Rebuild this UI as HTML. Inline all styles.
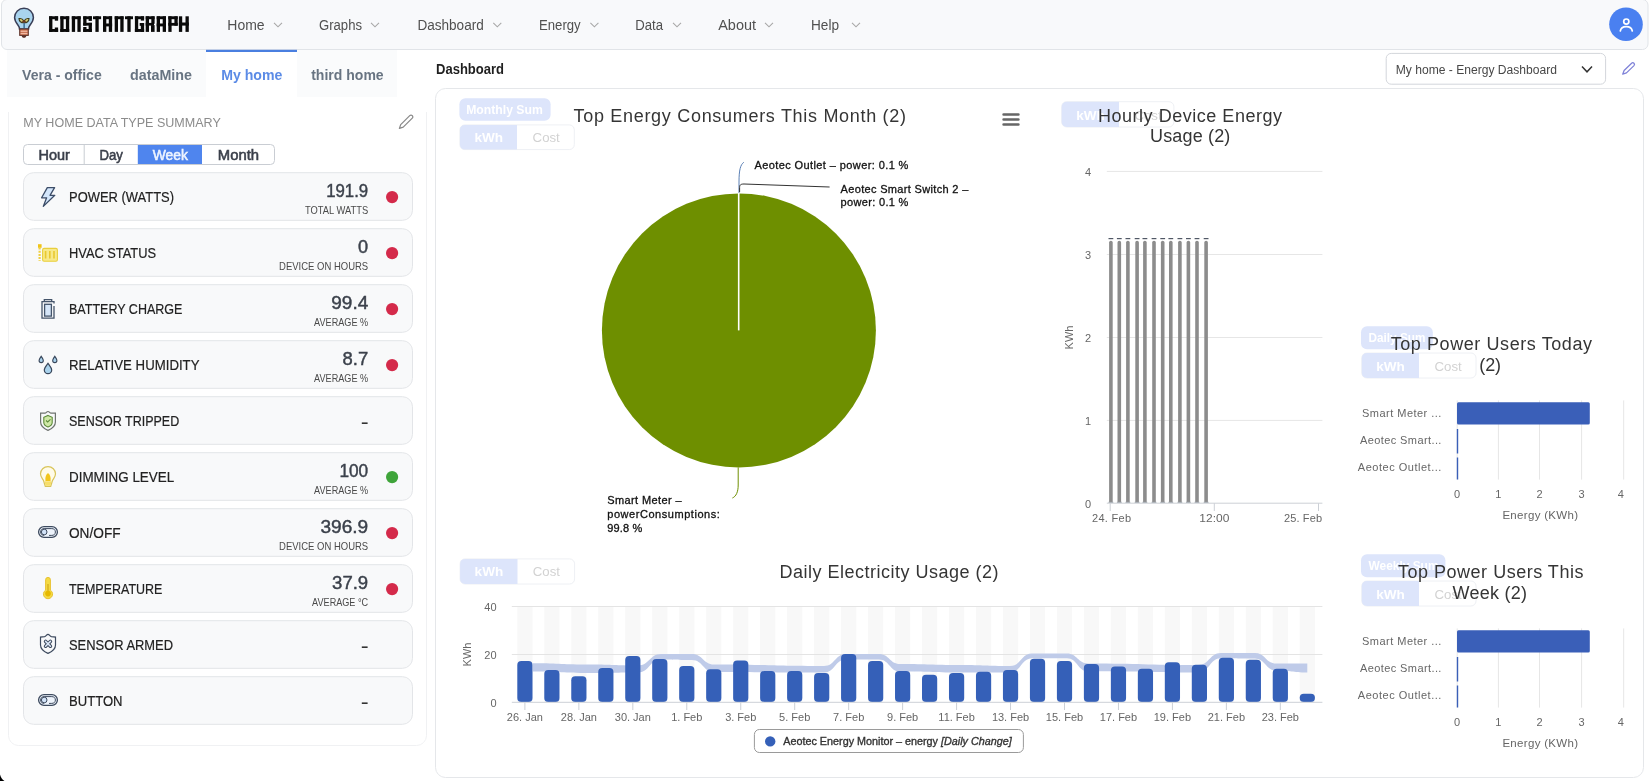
<!DOCTYPE html><html><head><meta charset="utf-8"><title>ConstantGraph</title><style>html,body{margin:0;padding:0;background:#fff;width:1649px;height:781px;overflow:hidden}svg{display:block;font-family:"Liberation Sans",sans-serif;will-change:transform}</style></head><body>
<svg width="1649" height="781" viewBox="0 0 1649 781">
<rect x="1.5" y="-0.5" width="1646.5" height="50" rx="5.5" fill="#f8f9fb" stroke="#e1e4e8" stroke-width="1"/>
<g>
<path d="M24,8.3 C18.7,8.3 14.6,12.4 14.6,17.6 C14.6,20.9 16.3,23 17.9,25 C18.9,26.3 19.5,27.5 19.5,29 L28.5,29 C28.5,27.5 29.1,26.3 30.1,25 C31.7,23 33.4,20.9 33.4,17.6 C33.4,12.4 29.3,8.3 24,8.3 Z" fill="#a9d4ef" stroke="#3a3f57" stroke-width="1.5"/>
<path d="M24,21 C22.5,18.6 20.5,18.2 19,18.6 C19.2,21.2 20.8,22.8 24,22.8 C27.2,22.8 28.8,21.2 29,18.6 C27.5,18.2 25.5,18.6 24,21 Z" fill="#dcd27a" stroke="#3d3a1c" stroke-width="1.1"/>
<ellipse cx="24" cy="21.6" rx="1.8" ry="1.4" fill="#6a3a20"/>
<rect x="23.4" y="22.8" width="1.5" height="6.2" fill="#3d6f95"/>
<rect x="19.7" y="29" width="8.6" height="6.4" fill="#c66e4e" stroke="#5a3028" stroke-width="1"/>
<rect x="20.6" y="30.6" width="6.8" height="1.3" fill="#f2b9a2"/>
<rect x="20.6" y="32.9" width="6.8" height="1.3" fill="#f2b9a2"/>
<path d="M21.6,35.4 L26.4,35.4 C26.2,36.8 25.4,37.7 24,37.7 C22.6,37.7 21.8,36.8 21.6,35.4 Z" fill="#5a3028"/>
</g>
<g fill="#0a0a0a"><rect x="49.10" y="16.30" width="3.30" height="15.60"/><rect x="49.10" y="16.30" width="9.00" height="2.90"/><rect x="49.10" y="29.00" width="9.00" height="2.90"/><rect x="54.80" y="16.30" width="3.30" height="4.40"/><rect x="54.80" y="27.50" width="3.30" height="4.40"/><rect x="60.30" y="16.30" width="3.30" height="15.60"/><rect x="65.90" y="16.30" width="3.30" height="15.60"/><rect x="60.30" y="16.30" width="8.90" height="2.90"/><rect x="60.30" y="29.00" width="8.90" height="2.90"/><rect x="71.80" y="16.30" width="3.30" height="15.60"/><rect x="77.40" y="16.30" width="3.30" height="15.60"/><rect x="71.80" y="16.30" width="8.90" height="2.90"/><rect x="83.20" y="16.30" width="8.70" height="2.90"/><rect x="88.60" y="16.30" width="3.30" height="4.60"/><rect x="83.20" y="16.30" width="3.30" height="9.30"/><rect x="83.20" y="22.80" width="8.70" height="2.80"/><rect x="88.60" y="22.80" width="3.30" height="9.10"/><rect x="83.20" y="29.00" width="8.70" height="2.90"/><rect x="83.20" y="27.00" width="3.30" height="4.90"/><rect x="93.00" y="16.30" width="8.10" height="2.90"/><rect x="95.40" y="16.30" width="3.30" height="15.60"/><rect x="103.00" y="16.30" width="3.30" height="15.60"/><rect x="108.80" y="16.30" width="3.30" height="15.60"/><rect x="103.00" y="16.30" width="9.10" height="2.90"/><rect x="103.00" y="23.50" width="9.10" height="2.90"/><rect x="114.70" y="16.30" width="3.30" height="15.60"/><rect x="120.30" y="16.30" width="3.30" height="15.60"/><rect x="114.70" y="16.30" width="8.90" height="2.90"/><rect x="125.00" y="16.30" width="8.00" height="2.90"/><rect x="127.35" y="16.30" width="3.30" height="15.60"/><rect x="134.90" y="16.30" width="3.30" height="15.60"/><rect x="134.90" y="16.30" width="9.20" height="2.90"/><rect x="134.90" y="29.00" width="9.20" height="2.90"/><rect x="140.80" y="16.30" width="3.30" height="4.30"/><rect x="140.80" y="23.00" width="3.30" height="8.90"/><rect x="139.70" y="23.00" width="4.40" height="2.80"/><rect x="145.70" y="16.30" width="3.30" height="15.60"/><rect x="151.30" y="16.30" width="3.30" height="7.50"/><rect x="145.70" y="16.30" width="8.90" height="2.90"/><rect x="145.70" y="22.90" width="8.30" height="2.70"/><rect x="151.00" y="25.10" width="3.60" height="6.80"/><rect x="156.70" y="16.30" width="3.30" height="15.60"/><rect x="162.70" y="16.30" width="3.30" height="15.60"/><rect x="156.70" y="16.30" width="9.30" height="2.90"/><rect x="156.70" y="23.50" width="9.30" height="2.90"/><rect x="168.30" y="16.30" width="3.30" height="15.60"/><rect x="168.30" y="16.30" width="9.40" height="2.90"/><rect x="174.40" y="16.30" width="3.30" height="9.40"/><rect x="168.30" y="22.90" width="9.40" height="2.80"/><rect x="178.90" y="16.30" width="3.30" height="15.60"/><rect x="185.50" y="16.30" width="3.30" height="15.60"/><rect x="178.90" y="22.50" width="9.90" height="3.10"/></g>
<text x="227.3" y="30.1" font-size="14" fill="#505050" textLength="37.3" lengthAdjust="spacingAndGlyphs" >Home</text>
<path d="M274,22.8 L278,26.8 L282,22.8" fill="none" stroke="#a8a8a8" stroke-width="1.1"/>
<text x="319" y="30.1" font-size="14" fill="#505050" textLength="43" lengthAdjust="spacingAndGlyphs" >Graphs</text>
<path d="M371,22.8 L375,26.8 L379,22.8" fill="none" stroke="#a8a8a8" stroke-width="1.1"/>
<text x="417.4" y="30.1" font-size="14" fill="#505050" textLength="66.4" lengthAdjust="spacingAndGlyphs" >Dashboard</text>
<path d="M493.3,22.8 L497.3,26.8 L501.3,22.8" fill="none" stroke="#a8a8a8" stroke-width="1.1"/>
<text x="539" y="30.1" font-size="14" fill="#505050" textLength="41.7" lengthAdjust="spacingAndGlyphs" >Energy</text>
<path d="M590.4,22.8 L594.4,26.8 L598.4,22.8" fill="none" stroke="#a8a8a8" stroke-width="1.1"/>
<text x="635.2" y="30.1" font-size="14" fill="#505050" textLength="27.8" lengthAdjust="spacingAndGlyphs" >Data</text>
<path d="M673,22.8 L677,26.8 L681,22.8" fill="none" stroke="#a8a8a8" stroke-width="1.1"/>
<text x="718.2" y="30.1" font-size="14" fill="#505050" textLength="37.8" lengthAdjust="spacingAndGlyphs" >About</text>
<path d="M765,22.8 L769,26.8 L773,22.8" fill="none" stroke="#a8a8a8" stroke-width="1.1"/>
<text x="811" y="30.1" font-size="14" fill="#505050" textLength="28" lengthAdjust="spacingAndGlyphs" >Help</text>
<path d="M852,22.8 L856,26.8 L860,22.8" fill="none" stroke="#a8a8a8" stroke-width="1.1"/>
<circle cx="1626" cy="24.2" r="16.8" fill="#4a80f0"/>
<circle cx="1626.3" cy="21.6" r="2.6" fill="none" stroke="#fff" stroke-width="1.7"/>
<path d="M1620.3,31 C1620.8,27.8 1623,26.6 1626.3,26.6 C1629.6,26.6 1631.8,27.8 1632.3,31" fill="none" stroke="#fff" stroke-width="1.7" stroke-linecap="round"/>
<rect x="7" y="50" width="390" height="47" fill="#fafbfc"/>
<rect x="206" y="50" width="91" height="47.5" fill="#ffffff"/>
<rect x="206" y="49.8" width="91" height="2.2" fill="#4a7fe0"/>
<text x="22.1" y="80" font-size="14" fill="#687482" font-weight="700" textLength="79.6" lengthAdjust="spacingAndGlyphs" >Vera - office</text>
<text x="130" y="80" font-size="14" fill="#687482" font-weight="700" textLength="62" lengthAdjust="spacingAndGlyphs" >dataMine</text>
<text x="221.2" y="80" font-size="14" fill="#5b8be6" font-weight="700" textLength="61.2" lengthAdjust="spacingAndGlyphs" >My home</text>
<text x="311.2" y="80" font-size="14" fill="#687482" font-weight="700" textLength="72.5" lengthAdjust="spacingAndGlyphs" >third home</text>
<text x="436" y="74" font-size="14" fill="#1f1f1f" font-weight="700" textLength="68" lengthAdjust="spacingAndGlyphs" >Dashboard</text>
<rect x="1386.2" y="53.4" width="219.4" height="30.8" rx="5" fill="#fff" stroke="#d3d6db"/>
<text x="1395.8" y="74.1" font-size="12.5" fill="#474747" textLength="161.2" lengthAdjust="spacingAndGlyphs" >My home - Energy Dashboard</text>
<path d="M1582,66.5 L1587,71.8 L1592,66.5" fill="none" stroke="#333" stroke-width="1.5"/>
<g fill="none" stroke="#7f82d8" stroke-width="1.25" stroke-linejoin="round"><path d="M1622.70,74.20 L1626.47,72.91 L1633.98,65.62 A1.7,1.7 0 0 0 1631.62,63.18 L1624.10,70.47 Z"/></g>
<defs><linearGradient id="fadeL" x1="0" y1="0" x2="0" y2="1"><stop offset="0" stop-color="#eceef1" stop-opacity="0"/><stop offset="0.05" stop-color="#eceef1" stop-opacity="1"/></linearGradient></defs>
<path d="M8.5,112 V735.5 A10,10 0 0 0 18.5,745.5 H416.5 A10,10 0 0 0 426.5,735.5 V112" fill="none" stroke="#f0f1f3" stroke-width="1"/>
<rect x="7" y="50" width="199" height="47" fill="#fafbfc"/><rect x="297" y="50" width="100" height="47" fill="#fafbfc"/>
<text x="22.1" y="80" font-size="14" fill="#687482" font-weight="700" textLength="79.6" lengthAdjust="spacingAndGlyphs" >Vera - office</text>
<text x="130" y="80" font-size="14" fill="#687482" font-weight="700" textLength="62" lengthAdjust="spacingAndGlyphs" >dataMine</text>
<text x="311.2" y="80" font-size="14" fill="#687482" font-weight="700" textLength="72.5" lengthAdjust="spacingAndGlyphs" >third home</text>
<text x="23.3" y="127.1" font-size="13" fill="#8c8c8c" textLength="197.5" lengthAdjust="spacingAndGlyphs" >MY HOME DATA TYPE SUMMARY</text>
<g fill="none" stroke="#8a8a8a" stroke-width="1.25" stroke-linejoin="round"><path d="M399.40,128.40 L403.22,127.14 L412.27,118.18 A1.8,1.8 0 0 0 409.73,115.62 L400.69,124.59 Z"/></g>
<rect x="23.5" y="144.5" width="251" height="20" rx="4" fill="#fff" stroke="#c9cdd3"/>
<rect x="137.8" y="145" width="64.2" height="19" fill="#4f85ee"/>
<line x1="84.2" y1="145" x2="84.2" y2="164" stroke="#c9cdd3"/>
<text x="38.5" y="160" font-size="14" fill="#3a3f4a" textLength="31.4" lengthAdjust="spacingAndGlyphs" stroke="#3a3f4a" stroke-width="0.55">Hour</text>
<text x="99.5" y="160" font-size="14" fill="#3a3f4a" textLength="23.4" lengthAdjust="spacingAndGlyphs" stroke="#3a3f4a" stroke-width="0.55">Day</text>
<text x="152.8" y="160" font-size="14" fill="#eef4ff" textLength="35.1" lengthAdjust="spacingAndGlyphs" stroke="#eef4ff" stroke-width="0.55">Week</text>
<text x="217.8" y="160" font-size="14" fill="#3a3f4a" textLength="41.2" lengthAdjust="spacingAndGlyphs" stroke="#3a3f4a" stroke-width="0.55">Month</text>
<rect x="23.5" y="172.7" width="389" height="47.6" rx="10" fill="#f8f9fa" stroke="#e3e5e8"/>
<g transform="translate(0,0)"><path d="M47.3,187.6 L54.6,187.6 L50,195.3 L54.8,195.3 L43.3,206.4 L46.6,197.8 L41.6,197.8 Z" fill="#d3e6fb" stroke="#3c4d68" stroke-width="1.3" stroke-linejoin="round"/></g>
<text x="69" y="202.2" font-size="14.6" fill="#222" textLength="105" lengthAdjust="spacingAndGlyphs" stroke="#222" stroke-width="0.2">POWER (WATTS)</text>
<text x="368.2" y="197.4" font-size="18.5" fill="#3b414b" text-anchor="end" textLength="42" lengthAdjust="spacingAndGlyphs" stroke="#3b414b" stroke-width="0.45">191.9</text>
<text x="368.2" y="214" font-size="10.4" fill="#4a4a4a" text-anchor="end" textLength="63.2" lengthAdjust="spacingAndGlyphs" >TOTAL WATTS</text>
<circle cx="392.1" cy="197.1" r="6.1" fill="#d42a4a"/>
<rect x="23.5" y="228.7" width="389" height="47.6" rx="10" fill="#f8f9fa" stroke="#e3e5e8"/>
<g transform="translate(0,0)"><rect x="38" y="244.2" width="3.6" height="3.6" fill="#f0c419"/><path d="M39.6,247.5 L39.6,261" stroke="#f0d040" stroke-width="2.2" stroke-dasharray="2,1.2"/><rect x="42.6" y="248.4" width="14.8" height="12.8" rx="1.5" fill="#f7e98a" stroke="#e9cf3c" stroke-width="1.1"/><path d="M45.6,251 V258.6 M49.8,251 V258.6 M54,251 V258.6" stroke="#e9c830" stroke-width="1.6"/></g>
<text x="69" y="258.2" font-size="14.6" fill="#222" textLength="87" lengthAdjust="spacingAndGlyphs" stroke="#222" stroke-width="0.2">HVAC STATUS</text>
<text x="368.2" y="253.4" font-size="18.5" fill="#3b414b" text-anchor="end" textLength="10.1" lengthAdjust="spacingAndGlyphs" stroke="#3b414b" stroke-width="0.45">0</text>
<text x="368.2" y="270" font-size="10.4" fill="#4a4a4a" text-anchor="end" textLength="89.1" lengthAdjust="spacingAndGlyphs" >DEVICE ON HOURS</text>
<circle cx="392.1" cy="253.1" r="6.1" fill="#d42a4a"/>
<rect x="23.5" y="284.7" width="389" height="47.6" rx="10" fill="#f8f9fa" stroke="#e3e5e8"/>
<g transform="translate(0,0)"><path d="M44.3,301.4 V299.6 H51.7 V301.4" fill="none" stroke="#44546a" stroke-width="1.3"/><path d="M54,306 V318.1 H42 V301.6 H54 V303.6" fill="none" stroke="#44546a" stroke-width="1.3"/><rect x="44.6" y="304.3" width="6.8" height="11.8" fill="#d6e6f8" stroke="#44546a" stroke-width="1.3"/></g>
<text x="69" y="314.2" font-size="14.6" fill="#222" textLength="113.4" lengthAdjust="spacingAndGlyphs" stroke="#222" stroke-width="0.2">BATTERY CHARGE</text>
<text x="368.2" y="309.4" font-size="18.5" fill="#3b414b" text-anchor="end" textLength="36.9" lengthAdjust="spacingAndGlyphs" stroke="#3b414b" stroke-width="0.45">99.4</text>
<text x="368.2" y="326" font-size="10.4" fill="#4a4a4a" text-anchor="end" textLength="54.1" lengthAdjust="spacingAndGlyphs" >AVERAGE %</text>
<circle cx="392.1" cy="309.1" r="6.1" fill="#d42a4a"/>
<rect x="23.5" y="340.7" width="389" height="47.6" rx="10" fill="#f8f9fa" stroke="#e3e5e8"/>
<g transform="translate(0,0)"><path d="M41.2,356.2 C40,358.2 39.1,359.3 39.1,360.5 A2.1,2.1 0 0 0 43.3,360.5 C43.3,359.3 42.4,358.2 41.2,356.2 Z" fill="#a9d2ec" stroke="#38465a" stroke-width="1.1"/><path d="M54.8,356.2 C53.6,358.2 52.7,359.3 52.7,360.5 A2.1,2.1 0 0 0 56.9,360.5 C56.9,359.3 56,358.2 54.8,356.2 Z" fill="#a9d2ec" stroke="#38465a" stroke-width="1.1"/><path d="M48,363.3 C46,366 44.3,367.8 44.3,370 A3.7,3.7 0 0 0 51.7,370 C51.7,367.8 50,366 48,363.3 Z" fill="#a9d2ec" stroke="#38465a" stroke-width="1.2"/></g>
<text x="69" y="370.2" font-size="14.6" fill="#222" textLength="130.5" lengthAdjust="spacingAndGlyphs" stroke="#222" stroke-width="0.2">RELATIVE HUMIDITY</text>
<text x="368.2" y="365.4" font-size="18.5" fill="#3b414b" text-anchor="end" textLength="25.6" lengthAdjust="spacingAndGlyphs" stroke="#3b414b" stroke-width="0.45">8.7</text>
<text x="368.2" y="382" font-size="10.4" fill="#4a4a4a" text-anchor="end" textLength="54.1" lengthAdjust="spacingAndGlyphs" >AVERAGE %</text>
<circle cx="392.1" cy="365.1" r="6.1" fill="#d42a4a"/>
<rect x="23.5" y="396.7" width="389" height="47.6" rx="10" fill="#f8f9fa" stroke="#e3e5e8"/>
<g transform="translate(0,0)"><path d="M48,411.5 C46.6,411.5 46.2,413.2 45,413.2 L40.6,413.2 L40.6,422 C40.6,426.5 44,428.7 48,430.4 C52,428.7 55.4,426.5 55.4,422 L55.4,413.2 L51,413.2 C49.8,413.2 49.4,411.5 48,411.5 Z" fill="none" stroke="#6f7470" stroke-width="1.2"/><path d="M48,415.4 L52.2,417.3 L52.2,422.5 C52.2,424.9 50.2,426.2 48,427.1 C45.8,426.2 43.8,424.9 43.8,422.5 L43.8,417.3 Z" fill="#cfe9a6" stroke="#5d8a3a" stroke-width="1.1"/><path d="M46,420.5 L47.7,422 L50.5,419.4" fill="none" stroke="#5d8a3a" stroke-width="1.1"/></g>
<text x="69" y="426.2" font-size="14.6" fill="#222" textLength="110.2" lengthAdjust="spacingAndGlyphs" stroke="#222" stroke-width="0.2">SENSOR TRIPPED</text>
<rect x="361.8" y="422.4" width="5.8" height="1.6" fill="#333"/>
<rect x="23.5" y="452.7" width="389" height="47.6" rx="10" fill="#f8f9fa" stroke="#e3e5e8"/>
<g transform="translate(0,0)"><path d="M48,466.6 C43.8,466.6 40.5,469.8 40.5,473.8 C40.5,477 42.5,478.6 43.6,480.8 L45.3,486.3 L50.7,486.3 L52.4,480.8 C53.5,478.6 55.5,477 55.5,473.8 C55.5,469.8 52.2,466.6 48,466.6 Z" fill="#fffbe8" stroke="#d8c45a" stroke-width="1.2"/><path d="M48,473 C49.8,474.5 50.6,476.5 50.6,478.3 L50.6,481 L45.4,481 L45.4,478.3 C45.4,476.5 46.2,474.5 48,473 Z" fill="#f2c51c"/><path d="M44.6,481.2 L51.4,481.2 L50.5,485.8 L45.5,485.8 Z" fill="#f7de6a"/></g>
<text x="69" y="482.2" font-size="14.6" fill="#222" textLength="105.2" lengthAdjust="spacingAndGlyphs" stroke="#222" stroke-width="0.2">DIMMING LEVEL</text>
<text x="368.2" y="477.4" font-size="18.5" fill="#3b414b" text-anchor="end" textLength="28.8" lengthAdjust="spacingAndGlyphs" stroke="#3b414b" stroke-width="0.45">100</text>
<text x="368.2" y="494" font-size="10.4" fill="#4a4a4a" text-anchor="end" textLength="54.1" lengthAdjust="spacingAndGlyphs" >AVERAGE %</text>
<circle cx="392.1" cy="477.1" r="6.1" fill="#3fa43a"/>
<rect x="23.5" y="508.7" width="389" height="47.6" rx="10" fill="#f8f9fa" stroke="#e3e5e8"/>
<g transform="translate(0,0)"><rect x="38.6" y="526.6" width="18.8" height="10.8" rx="5.4" fill="#eef4fc" stroke="#3e4b5f" stroke-width="1.3"/><path d="M44.2,535.4 C42,535.4 40.6,534 40.6,532 C40.6,530 42,528.6 44.2,528.6 L51.8,528.6 C54,528.6 55.4,530 55.4,532 C55.4,534 54,535.4 51.8,535.4 L49,535.4" fill="none" stroke="#3e4b5f" stroke-width="1"/><circle cx="44.2" cy="532" r="2.8" fill="#d2e3f8" stroke="#3e4b5f" stroke-width="1"/></g>
<text x="69" y="538.2" font-size="14.6" fill="#222" textLength="51.6" lengthAdjust="spacingAndGlyphs" stroke="#222" stroke-width="0.2">ON/OFF</text>
<text x="368.2" y="533.4" font-size="18.5" fill="#3b414b" text-anchor="end" textLength="47.7" lengthAdjust="spacingAndGlyphs" stroke="#3b414b" stroke-width="0.45">396.9</text>
<text x="368.2" y="550" font-size="10.4" fill="#4a4a4a" text-anchor="end" textLength="89.1" lengthAdjust="spacingAndGlyphs" >DEVICE ON HOURS</text>
<circle cx="392.1" cy="533.1" r="6.1" fill="#d42a4a"/>
<rect x="23.5" y="564.7" width="389" height="47.6" rx="10" fill="#f8f9fa" stroke="#e3e5e8"/>
<g transform="translate(0,0)"><path d="M45.6,579.8 A2.4,2.4 0 0 1 50.4,579.8 L50.4,590.2 A4.6,4.6 0 1 1 45.6,590.2 Z" fill="#f4da44" stroke="#e8c230" stroke-width="1"/><circle cx="48" cy="593.6" r="2.8" fill="#e6b800"/><rect x="47.3" y="584" width="1.4" height="7" fill="#d8b020"/></g>
<text x="69" y="594.2" font-size="14.6" fill="#222" textLength="93.4" lengthAdjust="spacingAndGlyphs" stroke="#222" stroke-width="0.2">TEMPERATURE</text>
<text x="368.2" y="589.4" font-size="18.5" fill="#3b414b" text-anchor="end" textLength="36.1" lengthAdjust="spacingAndGlyphs" stroke="#3b414b" stroke-width="0.45">37.9</text>
<text x="368.2" y="606" font-size="10.4" fill="#4a4a4a" text-anchor="end" textLength="56.1" lengthAdjust="spacingAndGlyphs" >AVERAGE °C</text>
<circle cx="392.1" cy="589.1" r="6.1" fill="#d42a4a"/>
<rect x="23.5" y="620.7" width="389" height="47.6" rx="10" fill="#f8f9fa" stroke="#e3e5e8"/>
<g transform="translate(0,0)"><path d="M48,634.4 C46.6,634.4 46.2,636.3 44.6,636.6 L40.5,637.1 L40.5,645 C40.5,649.2 44,651.7 48,653.4 C52,651.7 55.5,649.2 55.5,645 L55.5,637.1 L51.4,636.6 C49.8,636.3 49.4,634.4 48,634.4 Z" fill="none" stroke="#3e4b5f" stroke-width="1.2"/><path d="M45.6,641.4 L50.4,646.2 M50.4,641.4 L45.6,646.2" stroke="#3e4b5f" stroke-width="3.6" stroke-linecap="round"/><path d="M45.6,641.4 L50.4,646.2 M50.4,641.4 L45.6,646.2" stroke="#dce8f8" stroke-width="1.5" stroke-linecap="round"/></g>
<text x="69" y="650.2" font-size="14.6" fill="#222" textLength="104" lengthAdjust="spacingAndGlyphs" stroke="#222" stroke-width="0.2">SENSOR ARMED</text>
<rect x="361.8" y="646.4" width="5.8" height="1.6" fill="#333"/>
<rect x="23.5" y="676.7" width="389" height="47.6" rx="10" fill="#f8f9fa" stroke="#e3e5e8"/>
<g transform="translate(0,168)"><rect x="38.6" y="526.6" width="18.8" height="10.8" rx="5.4" fill="#eef4fc" stroke="#3e4b5f" stroke-width="1.3"/><path d="M44.2,535.4 C42,535.4 40.6,534 40.6,532 C40.6,530 42,528.6 44.2,528.6 L51.8,528.6 C54,528.6 55.4,530 55.4,532 C55.4,534 54,535.4 51.8,535.4 L49,535.4" fill="none" stroke="#3e4b5f" stroke-width="1"/><circle cx="44.2" cy="532" r="2.8" fill="#d2e3f8" stroke="#3e4b5f" stroke-width="1"/></g>
<text x="69" y="706.2" font-size="14.6" fill="#222" textLength="53.5" lengthAdjust="spacingAndGlyphs" stroke="#222" stroke-width="0.2">BUTTON</text>
<rect x="361.8" y="702.4" width="5.8" height="1.6" fill="#333"/>
<rect x="435.5" y="88.5" width="1208" height="689" rx="10" fill="#fff" stroke="#e5e7ea"/>
<rect x="459.4" y="98.2" width="91.2" height="22.6" rx="6" fill="#dde5fb"/>
<text x="466.2" y="113.8" font-size="12.5" fill="#ffffff" font-weight="700" textLength="76.6" lengthAdjust="spacingAndGlyphs" >Monthly Sum</text>
<rect x="459.9" y="124.9" width="114.4" height="24.7" rx="5" fill="#fff" stroke="#eef0f4"/>
<path d="M464.9,124.9 H517.0 V149.6 H464.9 A5,5 0 0 1 459.9,144.6 V129.9 A5,5 0 0 1 464.9,124.9 Z" fill="#dde5fb"/>
<text x="474.4" y="142.4" font-size="13.5" fill="#ffffff" font-weight="700" textLength="28.6" lengthAdjust="spacingAndGlyphs" >kWh</text>
<text x="532.6" y="142.4" font-size="13.5" fill="#d2d2d2" textLength="27.2" lengthAdjust="spacingAndGlyphs" >Cost</text>
<text x="573.5" y="121.8" font-size="18" fill="#353535" textLength="332.5" lengthAdjust="spacing" >Top Energy Consumers This Month (2)</text>
<path d="M1003.6,114.5 H1018.4 M1003.6,119.5 H1018.4 M1003.6,124.5 H1018.4" stroke="#666" stroke-width="2.6" stroke-linecap="round"/>
<circle cx="738.9" cy="330.4" r="137" fill="#6e8f00"/>
<line x1="738.7" y1="193" x2="738.7" y2="330.4" stroke="#fff" stroke-width="1.6"/>
<path d="M739,193 L739,182 C739,170 740.5,164.5 743.8,162.3" fill="none" stroke="#5a7fb5" stroke-width="1"/>
<path d="M739.6,192 L739.6,187.5 C739.6,185 740.5,184 744,184 L829.6,187" fill="none" stroke="#333" stroke-width="1"/>
<path d="M738.2,467.4 L738.2,485 C738.2,492 736,496.5 732.4,498" fill="none" stroke="#6e8f00" stroke-width="1"/>
<text x="754.4" y="169" font-size="11" fill="#111" textLength="154" lengthAdjust="spacing" stroke="#111" stroke-width="0.3">Aeotec Outlet – power: 0.1 %</text>
<text x="840.6" y="192.6" font-size="11" fill="#111" textLength="127.7" lengthAdjust="spacing" stroke="#111" stroke-width="0.3">Aeotec Smart Switch 2 –</text>
<text x="840.6" y="206.4" font-size="11" fill="#111" textLength="67.8" lengthAdjust="spacing" stroke="#111" stroke-width="0.3">power: 0.1 %</text>
<text x="607.3" y="503.7" font-size="11" fill="#111" textLength="74.2" lengthAdjust="spacing" stroke="#111" stroke-width="0.3">Smart Meter –</text>
<text x="607.3" y="518" font-size="11" fill="#111" textLength="112.5" lengthAdjust="spacing" stroke="#111" stroke-width="0.3">powerConsumptions:</text>
<text x="607.3" y="532" font-size="11" fill="#111" textLength="34.9" lengthAdjust="spacing" stroke="#111" stroke-width="0.3">99.8 %</text>
<rect x="1061.7" y="101.7" width="112.2" height="25.3" rx="5" fill="#fff" stroke="#eef0f4"/>
<path d="M1066.7,101.7 H1119.0 V127.0 H1066.7 A5,5 0 0 1 1061.7,122.0 V106.7 A5,5 0 0 1 1066.7,101.7 Z" fill="#dde5fb"/>
<text x="1076.2" y="119.5" font-size="13.5" fill="#ffffff" font-weight="700" textLength="28.6" lengthAdjust="spacingAndGlyphs" >kWh</text>
<text x="1134.4" y="119.5" font-size="13.5" fill="#d2d2d2" textLength="27.2" lengthAdjust="spacingAndGlyphs" >Cost</text>
<text x="1098" y="121.7" font-size="18" fill="#353535" textLength="184" lengthAdjust="spacing" >Hourly Device Energy</text>
<text x="1150" y="142.3" font-size="18" fill="#353535" textLength="80.3" lengthAdjust="spacing" >Usage (2)</text>
<line x1="1106.8" y1="171.4" x2="1322.4" y2="171.4" stroke="#e6e6e6" stroke-width="1"/>
<line x1="1106.8" y1="254.5" x2="1322.4" y2="254.5" stroke="#e6e6e6" stroke-width="1"/>
<line x1="1106.8" y1="337.5" x2="1322.4" y2="337.5" stroke="#e6e6e6" stroke-width="1"/>
<line x1="1106.8" y1="420.4" x2="1322.4" y2="420.4" stroke="#e6e6e6" stroke-width="1"/>
<text x="1091" y="175.70000000000002" font-size="11" fill="#666" text-anchor="end" >4</text>
<text x="1091" y="258.8" font-size="11" fill="#666" text-anchor="end" >3</text>
<text x="1091" y="341.8" font-size="11" fill="#666" text-anchor="end" >2</text>
<text x="1091" y="424.7" font-size="11" fill="#666" text-anchor="end" >1</text>
<text x="1091" y="507.5" font-size="11" fill="#666" text-anchor="end" >0</text>
<text x="0" y="0" font-size="11" fill="#666" text-anchor="middle" transform="translate(1073,337.5) rotate(-90)">KWh</text>
<path d="M1109.10,502.5 V242.5 A1.8,1.8 0 0 1 1112.70,242.5 V502.5 Z" fill="#8c8c8c"/>
<line x1="1108.50" y1="238.6" x2="1113.30" y2="238.6" stroke="#505865" stroke-width="1.2"/>
<line x1="1108.50" y1="502.3" x2="1113.30" y2="502.3" stroke="#9aa0aa" stroke-width="1"/>
<path d="M1117.50,502.5 V242.5 A1.8,1.8 0 0 1 1121.10,242.5 V502.5 Z" fill="#8c8c8c"/>
<line x1="1116.90" y1="238.6" x2="1121.70" y2="238.6" stroke="#505865" stroke-width="1.2"/>
<line x1="1116.90" y1="502.3" x2="1121.70" y2="502.3" stroke="#9aa0aa" stroke-width="1"/>
<path d="M1126.10,502.5 V242.5 A1.8,1.8 0 0 1 1129.70,242.5 V502.5 Z" fill="#8c8c8c"/>
<line x1="1125.50" y1="238.6" x2="1130.30" y2="238.6" stroke="#505865" stroke-width="1.2"/>
<line x1="1125.50" y1="502.3" x2="1130.30" y2="502.3" stroke="#9aa0aa" stroke-width="1"/>
<path d="M1135.30,502.5 V242.5 A1.8,1.8 0 0 1 1138.90,242.5 V502.5 Z" fill="#8c8c8c"/>
<line x1="1134.70" y1="238.6" x2="1139.50" y2="238.6" stroke="#505865" stroke-width="1.2"/>
<line x1="1134.70" y1="502.3" x2="1139.50" y2="502.3" stroke="#9aa0aa" stroke-width="1"/>
<path d="M1143.10,502.5 V242.5 A1.8,1.8 0 0 1 1146.70,242.5 V502.5 Z" fill="#8c8c8c"/>
<line x1="1142.50" y1="238.6" x2="1147.30" y2="238.6" stroke="#505865" stroke-width="1.2"/>
<line x1="1142.50" y1="502.3" x2="1147.30" y2="502.3" stroke="#9aa0aa" stroke-width="1"/>
<path d="M1152.20,502.5 V242.5 A1.8,1.8 0 0 1 1155.80,242.5 V502.5 Z" fill="#8c8c8c"/>
<line x1="1151.60" y1="238.6" x2="1156.40" y2="238.6" stroke="#505865" stroke-width="1.2"/>
<line x1="1151.60" y1="502.3" x2="1156.40" y2="502.3" stroke="#9aa0aa" stroke-width="1"/>
<path d="M1160.90,502.5 V242.5 A1.8,1.8 0 0 1 1164.50,242.5 V502.5 Z" fill="#8c8c8c"/>
<line x1="1160.30" y1="238.6" x2="1165.10" y2="238.6" stroke="#505865" stroke-width="1.2"/>
<line x1="1160.30" y1="502.3" x2="1165.10" y2="502.3" stroke="#9aa0aa" stroke-width="1"/>
<path d="M1169.00,502.5 V242.5 A1.8,1.8 0 0 1 1172.60,242.5 V502.5 Z" fill="#8c8c8c"/>
<line x1="1168.40" y1="238.6" x2="1173.20" y2="238.6" stroke="#505865" stroke-width="1.2"/>
<line x1="1168.40" y1="502.3" x2="1173.20" y2="502.3" stroke="#9aa0aa" stroke-width="1"/>
<path d="M1178.10,502.5 V242.5 A1.8,1.8 0 0 1 1181.70,242.5 V502.5 Z" fill="#8c8c8c"/>
<line x1="1177.50" y1="238.6" x2="1182.30" y2="238.6" stroke="#505865" stroke-width="1.2"/>
<line x1="1177.50" y1="502.3" x2="1182.30" y2="502.3" stroke="#9aa0aa" stroke-width="1"/>
<path d="M1186.60,502.5 V242.5 A1.8,1.8 0 0 1 1190.20,242.5 V502.5 Z" fill="#8c8c8c"/>
<line x1="1186.00" y1="238.6" x2="1190.80" y2="238.6" stroke="#505865" stroke-width="1.2"/>
<line x1="1186.00" y1="502.3" x2="1190.80" y2="502.3" stroke="#9aa0aa" stroke-width="1"/>
<path d="M1195.20,502.5 V242.5 A1.8,1.8 0 0 1 1198.80,242.5 V502.5 Z" fill="#8c8c8c"/>
<line x1="1194.60" y1="238.6" x2="1199.40" y2="238.6" stroke="#505865" stroke-width="1.2"/>
<line x1="1194.60" y1="502.3" x2="1199.40" y2="502.3" stroke="#9aa0aa" stroke-width="1"/>
<path d="M1204.30,502.5 V242.5 A1.8,1.8 0 0 1 1207.90,242.5 V502.5 Z" fill="#8c8c8c"/>
<line x1="1203.70" y1="238.6" x2="1208.50" y2="238.6" stroke="#505865" stroke-width="1.2"/>
<line x1="1203.70" y1="502.3" x2="1208.50" y2="502.3" stroke="#9aa0aa" stroke-width="1"/>
<line x1="1106.8" y1="503.2" x2="1322.4" y2="503.2" stroke="#ccd0d6" stroke-width="1"/>
<line x1="1110.2" y1="503.2" x2="1110.2" y2="511" stroke="#ccd0d6" stroke-width="1"/>
<line x1="1214.3" y1="503.2" x2="1214.3" y2="511" stroke="#ccd0d6" stroke-width="1"/>
<line x1="1318.5" y1="503.2" x2="1318.5" y2="511" stroke="#ccd0d6" stroke-width="1"/>
<text x="1111.5" y="521.9" font-size="11" fill="#666" text-anchor="middle" textLength="39" lengthAdjust="spacing" >24. Feb</text>
<text x="1214.3" y="521.9" font-size="11" fill="#666" text-anchor="middle" textLength="30" lengthAdjust="spacingAndGlyphs" >12:00</text>
<text x="1303" y="521.9" font-size="11" fill="#666" text-anchor="middle" textLength="38" lengthAdjust="spacing" >25. Feb</text>
<rect x="1361" y="326.3" width="71.8" height="22.9" rx="6" fill="#dde5fb"/>
<text x="1368.5" y="342" font-size="12.5" fill="#ffffff" font-weight="700" textLength="57" lengthAdjust="spacingAndGlyphs" >Daily Sum</text>
<rect x="1361.8" y="353" width="114.2" height="25" rx="5" fill="#fff" stroke="#eef0f4"/>
<path d="M1366.8,353 H1419.0 V378 H1366.8 A5,5 0 0 1 1361.8,373 V358 A5,5 0 0 1 1366.8,353 Z" fill="#dde5fb"/>
<text x="1376.3" y="370.6" font-size="13.5" fill="#ffffff" font-weight="700" textLength="28.6" lengthAdjust="spacingAndGlyphs" >kWh</text>
<text x="1434.5" y="370.6" font-size="13.5" fill="#d2d2d2" textLength="27.2" lengthAdjust="spacingAndGlyphs" >Cost</text>
<text x="1390.7" y="349.6" font-size="18" fill="#353535" textLength="201.3" lengthAdjust="spacing" >Top Power Users Today</text>
<text x="1479.3" y="370.8" font-size="18" fill="#353535" textLength="21.7" lengthAdjust="spacing" >(2)</text>
<line x1="1498.4" y1="400.4" x2="1498.4" y2="479.6" stroke="#e6e6e6" stroke-width="1"/>
<line x1="1539.5" y1="400.4" x2="1539.5" y2="479.6" stroke="#e6e6e6" stroke-width="1"/>
<line x1="1581.6" y1="400.4" x2="1581.6" y2="479.6" stroke="#e6e6e6" stroke-width="1"/>
<line x1="1623.7" y1="400.4" x2="1623.7" y2="479.6" stroke="#e6e6e6" stroke-width="1"/>
<line x1="1457.2" y1="400.4" x2="1457.2" y2="479.6" stroke="#e6e6e6" stroke-width="1"/>
<rect x="1457" y="402.2" width="132.8" height="22.4" rx="1.5" fill="#3a5fb8"/>
<rect x="1456.8" y="429" width="1.4" height="24.5" fill="#3a5fb8"/>
<rect x="1456.8" y="457.5" width="1.4" height="22" fill="#3a5fb8"/>
<text x="1441.4" y="416.9" font-size="11" fill="#666" text-anchor="end" textLength="79.4" lengthAdjust="spacing" >Smart Meter ...</text>
<text x="1441.4" y="443.8" font-size="11" fill="#666" text-anchor="end" textLength="81.4" lengthAdjust="spacing" >Aeotec Smart...</text>
<text x="1441.4" y="471" font-size="11" fill="#666" text-anchor="end" textLength="83.6" lengthAdjust="spacing" >Aeotec Outlet...</text>
<text x="1457" y="498.4" font-size="11" fill="#666" text-anchor="middle" >0</text>
<text x="1498.4" y="498.4" font-size="11" fill="#666" text-anchor="middle" >1</text>
<text x="1539.5" y="498.4" font-size="11" fill="#666" text-anchor="middle" >2</text>
<text x="1581.6" y="498.4" font-size="11" fill="#666" text-anchor="middle" >3</text>
<text x="1620.7" y="498.4" font-size="11" fill="#666" text-anchor="middle" >4</text>
<text x="1502.4" y="519" font-size="11.5" fill="#666" textLength="75.6" lengthAdjust="spacing" >Energy (KWh)</text>
<rect x="1361" y="554.3" width="84.4" height="22.9" rx="6" fill="#dde5fb"/>
<text x="1368.5" y="570" font-size="12.5" fill="#ffffff" font-weight="700" textLength="70" lengthAdjust="spacingAndGlyphs" >Weekly Sum</text>
<rect x="1361.8" y="581" width="114.2" height="25" rx="5" fill="#fff" stroke="#eef0f4"/>
<path d="M1366.8,581 H1419.0 V606 H1366.8 A5,5 0 0 1 1361.8,601 V586 A5,5 0 0 1 1366.8,581 Z" fill="#dde5fb"/>
<text x="1376.3" y="598.6" font-size="13.5" fill="#ffffff" font-weight="700" textLength="28.6" lengthAdjust="spacingAndGlyphs" >kWh</text>
<text x="1434.5" y="598.6" font-size="13.5" fill="#d2d2d2" textLength="27.2" lengthAdjust="spacingAndGlyphs" >Cost</text>
<text x="1398" y="577.6" font-size="18" fill="#353535" textLength="185.4" lengthAdjust="spacing" >Top Power Users This</text>
<text x="1452.5" y="598.8" font-size="18" fill="#353535" textLength="74.5" lengthAdjust="spacing" >Week (2)</text>
<line x1="1498.4" y1="628.4" x2="1498.4" y2="707.6" stroke="#e6e6e6" stroke-width="1"/>
<line x1="1539.5" y1="628.4" x2="1539.5" y2="707.6" stroke="#e6e6e6" stroke-width="1"/>
<line x1="1581.6" y1="628.4" x2="1581.6" y2="707.6" stroke="#e6e6e6" stroke-width="1"/>
<line x1="1623.7" y1="628.4" x2="1623.7" y2="707.6" stroke="#e6e6e6" stroke-width="1"/>
<line x1="1457.2" y1="628.4" x2="1457.2" y2="707.6" stroke="#e6e6e6" stroke-width="1"/>
<rect x="1457" y="630.2" width="132.8" height="22.4" rx="1.5" fill="#3a5fb8"/>
<rect x="1456.8" y="657" width="1.4" height="24.5" fill="#3a5fb8"/>
<rect x="1456.8" y="685.5" width="1.4" height="22" fill="#3a5fb8"/>
<text x="1441.4" y="644.9" font-size="11" fill="#666" text-anchor="end" textLength="79.4" lengthAdjust="spacing" >Smart Meter ...</text>
<text x="1441.4" y="671.8" font-size="11" fill="#666" text-anchor="end" textLength="81.4" lengthAdjust="spacing" >Aeotec Smart...</text>
<text x="1441.4" y="699" font-size="11" fill="#666" text-anchor="end" textLength="83.6" lengthAdjust="spacing" >Aeotec Outlet...</text>
<text x="1457" y="726.4" font-size="11" fill="#666" text-anchor="middle" >0</text>
<text x="1498.4" y="726.4" font-size="11" fill="#666" text-anchor="middle" >1</text>
<text x="1539.5" y="726.4" font-size="11" fill="#666" text-anchor="middle" >2</text>
<text x="1581.6" y="726.4" font-size="11" fill="#666" text-anchor="middle" >3</text>
<text x="1620.7" y="726.4" font-size="11" fill="#666" text-anchor="middle" >4</text>
<text x="1502.4" y="747" font-size="11.5" fill="#666" textLength="75.6" lengthAdjust="spacing" >Energy (KWh)</text>
<rect x="460.1" y="558.9" width="114.5" height="25.1" rx="5" fill="#fff" stroke="#eef0f4"/>
<path d="M465.1,558.9 H517.5 V584.0 H465.1 A5,5 0 0 1 460.1,579.0 V563.9 A5,5 0 0 1 465.1,558.9 Z" fill="#dde5fb"/>
<text x="474.6" y="576.4" font-size="13.5" fill="#ffffff" font-weight="700" textLength="28.6" lengthAdjust="spacingAndGlyphs" >kWh</text>
<text x="532.8000000000001" y="576.4" font-size="13.5" fill="#d2d2d2" textLength="27.2" lengthAdjust="spacingAndGlyphs" >Cost</text>
<text x="779.4" y="578.1" font-size="18" fill="#353535" textLength="219.1" lengthAdjust="spacing" >Daily Electricity Usage (2)</text>
<rect x="517.30" y="606.5" width="15.2" height="95.5" fill="#f8f8f8"/>
<rect x="544.28" y="606.5" width="15.2" height="95.5" fill="#f8f8f8"/>
<rect x="571.26" y="606.5" width="15.2" height="95.5" fill="#f8f8f8"/>
<rect x="598.24" y="606.5" width="15.2" height="95.5" fill="#f8f8f8"/>
<rect x="625.22" y="606.5" width="15.2" height="95.5" fill="#f8f8f8"/>
<rect x="652.20" y="606.5" width="15.2" height="95.5" fill="#f8f8f8"/>
<rect x="679.18" y="606.5" width="15.2" height="95.5" fill="#f8f8f8"/>
<rect x="706.16" y="606.5" width="15.2" height="95.5" fill="#f8f8f8"/>
<rect x="733.14" y="606.5" width="15.2" height="95.5" fill="#f8f8f8"/>
<rect x="760.12" y="606.5" width="15.2" height="95.5" fill="#f8f8f8"/>
<rect x="787.10" y="606.5" width="15.2" height="95.5" fill="#f8f8f8"/>
<rect x="814.08" y="606.5" width="15.2" height="95.5" fill="#f8f8f8"/>
<rect x="841.06" y="606.5" width="15.2" height="95.5" fill="#f8f8f8"/>
<rect x="868.04" y="606.5" width="15.2" height="95.5" fill="#f8f8f8"/>
<rect x="895.02" y="606.5" width="15.2" height="95.5" fill="#f8f8f8"/>
<rect x="922.00" y="606.5" width="15.2" height="95.5" fill="#f8f8f8"/>
<rect x="948.98" y="606.5" width="15.2" height="95.5" fill="#f8f8f8"/>
<rect x="975.96" y="606.5" width="15.2" height="95.5" fill="#f8f8f8"/>
<rect x="1002.94" y="606.5" width="15.2" height="95.5" fill="#f8f8f8"/>
<rect x="1029.92" y="606.5" width="15.2" height="95.5" fill="#f8f8f8"/>
<rect x="1056.90" y="606.5" width="15.2" height="95.5" fill="#f8f8f8"/>
<rect x="1083.88" y="606.5" width="15.2" height="95.5" fill="#f8f8f8"/>
<rect x="1110.86" y="606.5" width="15.2" height="95.5" fill="#f8f8f8"/>
<rect x="1137.84" y="606.5" width="15.2" height="95.5" fill="#f8f8f8"/>
<rect x="1164.82" y="606.5" width="15.2" height="95.5" fill="#f8f8f8"/>
<rect x="1191.80" y="606.5" width="15.2" height="95.5" fill="#f8f8f8"/>
<rect x="1218.78" y="606.5" width="15.2" height="95.5" fill="#f8f8f8"/>
<rect x="1245.76" y="606.5" width="15.2" height="95.5" fill="#f8f8f8"/>
<rect x="1272.74" y="606.5" width="15.2" height="95.5" fill="#f8f8f8"/>
<rect x="1299.72" y="606.5" width="15.2" height="95.5" fill="#f8f8f8"/>
<line x1="511.8" y1="606.5" x2="1322.4" y2="606.5" stroke="#e4e4e4" stroke-width="1"/>
<line x1="511.8" y1="654.5" x2="1322.4" y2="654.5" stroke="#e4e4e4" stroke-width="1"/>
<path d="M533,663.2 C561.5,663.2 561.5,664.5 590,664.5 C614.0,664.5 614.0,665.5 638,665.5 C649.5,665.5 649.5,654 661,654 C676.5,654 676.5,654 692,654 C703.0,654 703.0,664.5 714,664.5 C769.0,664.5 769.0,666 824,666 C835.0,666 835.0,654 846,654 C862.5,654 862.5,654 879,654 C889.5,654 889.5,664 900,664 C930.0,664 930.0,665 960,665 C985.0,665 985.0,666 1010,666 C1021.0,666 1021.0,653.6 1032,653.6 C1049.5,653.6 1049.5,653.6 1067,653.6 C1077.5,653.6 1077.5,663.5 1088,663.5 C1143.0,663.5 1143.0,665 1198,665 C1209.5,665 1209.5,653 1221,653 C1238.0,653 1238.0,653 1255,653 C1265.5,653 1265.5,663.5 1276,663.5 C1291.65,663.5 1291.65,663.5 1307.3,663.5 L1307.3,672.5 C1291.65,672.5 1291.65,670.5 1276,670.5 C1265.5,670.5 1265.5,658.5 1255,658.5 C1238.0,658.5 1238.0,658.2 1221,658.2 C1209.5,658.2 1209.5,672.5 1198,672.5 C1143.0,672.5 1143.0,671.3 1088,671.3 C1077.5,671.3 1077.5,658.2 1067,658.2 C1049.5,658.2 1049.5,658.2 1032,658.2 C1021.0,658.2 1021.0,672.5 1010,672.5 C985.0,672.5 985.0,672.5 960,672.5 C930.0,672.5 930.0,671.5 900,671.5 C889.5,671.5 889.5,659.5 879,659.5 C862.5,659.5 862.5,659.5 846,659.5 C835.0,659.5 835.0,672.5 824,672.5 C769.0,672.5 769.0,672 714,672 C703.0,672 703.0,660 692,660 C676.5,660 676.5,659.5 661,659.5 C649.5,659.5 649.5,672.5 638,672.5 C614.0,672.5 614.0,673 590,673 C561.5,673 561.5,671.5 533,671.5 Z" fill="#bfcbe9"/>
<rect x="517.30" y="661.1" width="15.2" height="40.9" rx="4" fill="#3560b8"/>
<rect x="544.28" y="670" width="15.2" height="32.0" rx="4" fill="#3560b8"/>
<rect x="571.26" y="676.2" width="15.2" height="25.8" rx="4" fill="#3560b8"/>
<rect x="598.24" y="668" width="15.2" height="34.0" rx="4" fill="#3560b8"/>
<rect x="625.22" y="656" width="15.2" height="46.0" rx="4" fill="#3560b8"/>
<rect x="652.20" y="659.1" width="15.2" height="42.9" rx="4" fill="#3560b8"/>
<rect x="679.18" y="666" width="15.2" height="36.0" rx="4" fill="#3560b8"/>
<rect x="706.16" y="669.3" width="15.2" height="32.7" rx="4" fill="#3560b8"/>
<rect x="733.14" y="660.4" width="15.2" height="41.6" rx="4" fill="#3560b8"/>
<rect x="760.12" y="671" width="15.2" height="31.0" rx="4" fill="#3560b8"/>
<rect x="787.10" y="671" width="15.2" height="31.0" rx="4" fill="#3560b8"/>
<rect x="814.08" y="673.1" width="15.2" height="28.9" rx="4" fill="#3560b8"/>
<rect x="841.06" y="654" width="15.2" height="48.0" rx="4" fill="#3560b8"/>
<rect x="868.04" y="661.1" width="15.2" height="40.9" rx="4" fill="#3560b8"/>
<rect x="895.02" y="671" width="15.2" height="31.0" rx="4" fill="#3560b8"/>
<rect x="922.00" y="674.7" width="15.2" height="27.3" rx="4" fill="#3560b8"/>
<rect x="948.98" y="672.9" width="15.2" height="29.1" rx="4" fill="#3560b8"/>
<rect x="975.96" y="671.8" width="15.2" height="30.2" rx="4" fill="#3560b8"/>
<rect x="1002.94" y="670" width="15.2" height="32.0" rx="4" fill="#3560b8"/>
<rect x="1029.92" y="658.8" width="15.2" height="43.2" rx="4" fill="#3560b8"/>
<rect x="1056.90" y="660.9" width="15.2" height="41.1" rx="4" fill="#3560b8"/>
<rect x="1083.88" y="664" width="15.2" height="38.0" rx="4" fill="#3560b8"/>
<rect x="1110.86" y="666.6" width="15.2" height="35.4" rx="4" fill="#3560b8"/>
<rect x="1137.84" y="668.7" width="15.2" height="33.3" rx="4" fill="#3560b8"/>
<rect x="1164.82" y="662.2" width="15.2" height="39.8" rx="4" fill="#3560b8"/>
<rect x="1191.80" y="664.8" width="15.2" height="37.2" rx="4" fill="#3560b8"/>
<rect x="1218.78" y="657.7" width="15.2" height="44.3" rx="4" fill="#3560b8"/>
<rect x="1245.76" y="659.8" width="15.2" height="42.2" rx="4" fill="#3560b8"/>
<rect x="1272.74" y="668.7" width="15.2" height="33.3" rx="4" fill="#3560b8"/>
<rect x="1299.72" y="693.7" width="15.2" height="8.3" rx="4" fill="#3560b8"/>
<line x1="511.8" y1="702.3" x2="1322.4" y2="702.3" stroke="#ccd0d6" stroke-width="1"/>
<line x1="524.90" y1="702.3" x2="524.90" y2="710" stroke="#ccd0d6" stroke-width="1"/>
<text x="524.90" y="720.9" font-size="11" fill="#666" text-anchor="middle" >26. Jan</text>
<line x1="578.86" y1="702.3" x2="578.86" y2="710" stroke="#ccd0d6" stroke-width="1"/>
<text x="578.86" y="720.9" font-size="11" fill="#666" text-anchor="middle" >28. Jan</text>
<line x1="632.82" y1="702.3" x2="632.82" y2="710" stroke="#ccd0d6" stroke-width="1"/>
<text x="632.82" y="720.9" font-size="11" fill="#666" text-anchor="middle" >30. Jan</text>
<line x1="686.78" y1="702.3" x2="686.78" y2="710" stroke="#ccd0d6" stroke-width="1"/>
<text x="686.78" y="720.9" font-size="11" fill="#666" text-anchor="middle" >1. Feb</text>
<line x1="740.74" y1="702.3" x2="740.74" y2="710" stroke="#ccd0d6" stroke-width="1"/>
<text x="740.74" y="720.9" font-size="11" fill="#666" text-anchor="middle" >3. Feb</text>
<line x1="794.70" y1="702.3" x2="794.70" y2="710" stroke="#ccd0d6" stroke-width="1"/>
<text x="794.70" y="720.9" font-size="11" fill="#666" text-anchor="middle" >5. Feb</text>
<line x1="848.66" y1="702.3" x2="848.66" y2="710" stroke="#ccd0d6" stroke-width="1"/>
<text x="848.66" y="720.9" font-size="11" fill="#666" text-anchor="middle" >7. Feb</text>
<line x1="902.62" y1="702.3" x2="902.62" y2="710" stroke="#ccd0d6" stroke-width="1"/>
<text x="902.62" y="720.9" font-size="11" fill="#666" text-anchor="middle" >9. Feb</text>
<line x1="956.58" y1="702.3" x2="956.58" y2="710" stroke="#ccd0d6" stroke-width="1"/>
<text x="956.58" y="720.9" font-size="11" fill="#666" text-anchor="middle" >11. Feb</text>
<line x1="1010.54" y1="702.3" x2="1010.54" y2="710" stroke="#ccd0d6" stroke-width="1"/>
<text x="1010.54" y="720.9" font-size="11" fill="#666" text-anchor="middle" >13. Feb</text>
<line x1="1064.50" y1="702.3" x2="1064.50" y2="710" stroke="#ccd0d6" stroke-width="1"/>
<text x="1064.50" y="720.9" font-size="11" fill="#666" text-anchor="middle" >15. Feb</text>
<line x1="1118.46" y1="702.3" x2="1118.46" y2="710" stroke="#ccd0d6" stroke-width="1"/>
<text x="1118.46" y="720.9" font-size="11" fill="#666" text-anchor="middle" >17. Feb</text>
<line x1="1172.42" y1="702.3" x2="1172.42" y2="710" stroke="#ccd0d6" stroke-width="1"/>
<text x="1172.42" y="720.9" font-size="11" fill="#666" text-anchor="middle" >19. Feb</text>
<line x1="1226.38" y1="702.3" x2="1226.38" y2="710" stroke="#ccd0d6" stroke-width="1"/>
<text x="1226.38" y="720.9" font-size="11" fill="#666" text-anchor="middle" >21. Feb</text>
<line x1="1280.34" y1="702.3" x2="1280.34" y2="710" stroke="#ccd0d6" stroke-width="1"/>
<text x="1280.34" y="720.9" font-size="11" fill="#666" text-anchor="middle" >23. Feb</text>
<text x="496.6" y="610.9" font-size="11" fill="#666" text-anchor="end" >40</text>
<text x="496.6" y="658.9" font-size="11" fill="#666" text-anchor="end" >20</text>
<text x="496.6" y="706.6999999999999" font-size="11" fill="#666" text-anchor="end" >0</text>
<text x="0" y="0" font-size="11" fill="#666" text-anchor="middle" transform="translate(470.5,654.5) rotate(-90)">KWh</text>
<rect x="754.4" y="729.5" width="269" height="23" rx="5" fill="#fff" stroke="#9a9a9a"/>
<circle cx="770.2" cy="741.4" r="5.2" fill="#3560b8"/>
<text x="783.3" y="745.3" font-size="11" fill="#333" textLength="228.4" lengthAdjust="spacingAndGlyphs" stroke="#333" stroke-width="0.35">Aeotec Energy Monitor – energy <tspan font-style="italic">[Daily Change]</tspan></text>
<path d="M0,774.5 C0.8,777.5 2,779.6 4.5,781 L0,781 Z" fill="#000"/>
</svg></body></html>
